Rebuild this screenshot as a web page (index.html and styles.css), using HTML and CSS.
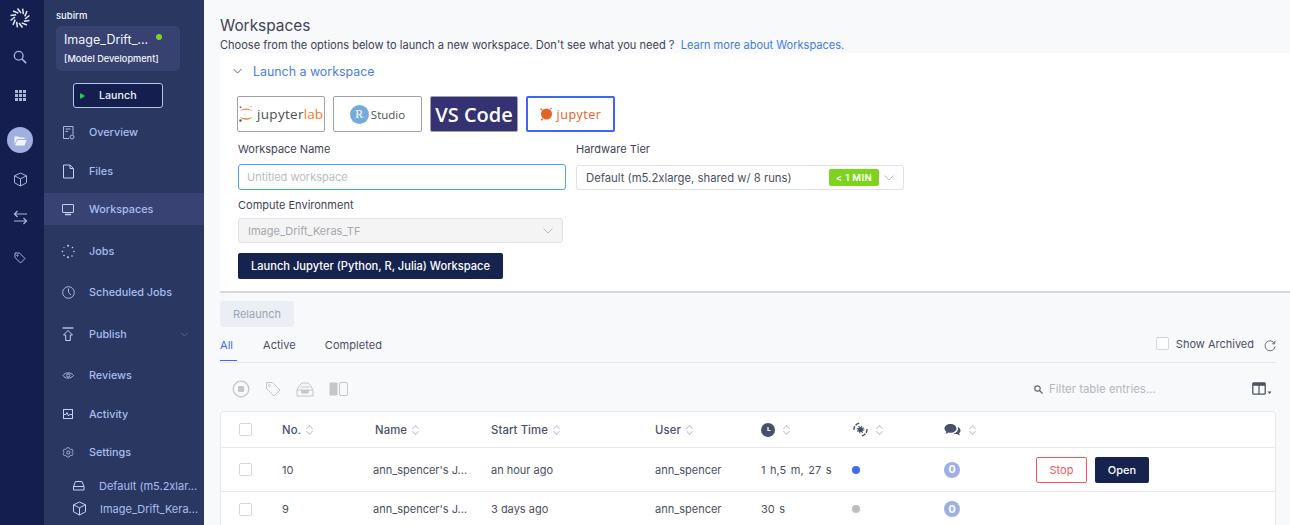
FILE: index.html
```html
<!DOCTYPE html>
<html lang="en">
<head>
<meta charset="utf-8">
<title>Workspaces</title>
<link rel="stylesheet" href="styles.css">
</head>
<body>
<div class="app">
  <nav class="rail">
    <svg class="rail-logo" width="26" height="26" viewBox="0 0 26 26" fill="none" stroke="#e8ebf5" stroke-width="1.500"><path d="M10.500 3.500L14 8"/><path d="M10.500 3.500L14 8" transform="rotate(30 13 13)"/><path d="M10.500 3.500L14 8" transform="rotate(60 13 13)"/><path d="M10.500 3.500L14 8" transform="rotate(90 13 13)"/><path d="M10.500 3.500L14 8" transform="rotate(120 13 13)"/><path d="M10.500 3.500L14 8" transform="rotate(150 13 13)"/><path d="M10.500 3.500L14 8" transform="rotate(180 13 13)"/><path d="M10.500 3.500L14 8" transform="rotate(210 13 13)"/><path d="M10.500 3.500L14 8" transform="rotate(240 13 13)"/><path d="M10.500 3.500L14 8" transform="rotate(270 13 13)"/><path d="M10.500 3.500L14 8" transform="rotate(300 13 13)"/><path d="M10.500 3.500L14 8" transform="rotate(330 13 13)"/></svg>
    <svg class="rail-ico rail-search" width="14" height="14" viewBox="0 0 16 16" fill="none" stroke="#a9b5d9" stroke-width="1.500"><circle cx="6.500" cy="6.500" r="5"/><path d="M10 10l5 5" stroke-width="2"/></svg>
    <svg class="rail-ico rail-grid" width="11" height="11" viewBox="0 0 11 11" fill="#a9b5d9"><rect width="3" height="3"/><rect x="4" width="3" height="3"/><rect x="8" width="3" height="3"/><rect y="4" width="3" height="3"/><rect x="4" y="4" width="3" height="3"/><rect x="8" y="4" width="3" height="3"/><rect y="8" width="3" height="3"/><rect x="4" y="8" width="3" height="3"/><rect x="8" y="8" width="3" height="3"/></svg>
    <div class="rail-active"><svg width="13" height="11" viewBox="0 0 13 11" fill="#f3f5fc"><path d="M.5 1.500h4l1 1h5v1.500H3L.5 9.500z"/><path d="M3.500 5h9L10.500 10.500H1z"/></svg></div>
    <svg class="rail-ico rail-cube" width="15" height="15" viewBox="0 0 15 15" fill="none" stroke="#a9b5d9" stroke-width="1"><path d="M7.500 1l6 2.800v7L7.500 14l-6-3.200v-7z"/><path d="M1.500 3.800l6 3 6-3M7.500 6.800V14"/></svg>
    <svg class="rail-ico rail-swap" width="15" height="15" viewBox="0 0 15 15" fill="none" stroke="#a9b5d9" stroke-width="1.200"><path d="M14 4H1.500M4.500 1L1.500 4l3 3"/><path d="M1 11h12.500M10.500 8l3 3-3 3"/></svg>
    <svg class="rail-ico rail-tag" width="12" height="12" viewBox="0 0 12 12" fill="none" stroke="#a9b5d9" stroke-width="1"><path d="M1 1h4.500L11 6.500 6.500 11 1 5.500z"/><circle cx="3.500" cy="3.500" r=".7"/></svg>
  </nav>

  <aside class="side">
    <div class="owner">subirm</div>
    <div class="project">
      <div class="project-top"><span class="project-name">Image_Drift_...</span><span class="project-dot"></span></div>
      <div class="project-stage">[Model Development]</div>
    </div>
    <div class="launch"><span class="launch-play"></span><span>Launch</span></div>
    <ul class="nav">
      <li class="nav-item">
        <svg width="15" height="15" viewBox="0 0 15 15" fill="none" stroke="#a9b9e6"><path d="M8 13.500H2.500v-12h9.500v8"/><path d="M4.500 4h5M4.500 6.500h2.500"/><circle cx="11" cy="12" r="2"/></svg>
        <span>Overview</span></li>
      <li class="nav-item gap-7">
        <svg width="15" height="15" viewBox="0 0 15 15" fill="none" stroke="#c6d1f0"><path d="M2.500 1h6.500l3.500 3.500v9.500h-10z"/><path d="M9 1v3.500h3.500"/></svg>
        <span>Files</span></li>
      <li class="nav-item gap-6 nav-active">
        <svg width="15" height="15" viewBox="0 0 15 15" fill="none" stroke="#c6d1f0"><rect x="1.500" y="2.500" width="11" height="8" rx=".5"/><path d="M4 12.500h6" stroke-width="1.500"/></svg>
        <span>Workspaces</span></li>
      <li class="nav-item gap-10">
        <svg width="15" height="15" viewBox="0 0 15 15" fill="#c6d1f0"><circle cx="7" cy="1.800" r="1"/><circle cx="11.500" cy="3.500" r=".8"/><circle cx="13" cy="7.500" r=".8"/><circle cx="11" cy="12" r=".8"/><circle cx="7" cy="13.200" r="1"/><circle cx="3" cy="11.500" r=".8"/><circle cx="1.500" cy="7.500" r=".8"/><circle cx="3" cy="3.500" r=".6"/></svg>
        <span>Jobs</span></li>
      <li class="nav-item gap-9">
        <svg width="15" height="15" viewBox="0 0 15 15" fill="none" stroke="#a9b9e6"><circle cx="7.500" cy="7.500" r="5.800"/><path d="M7.500 3.500v4l2.500 2.500"/></svg>
        <span>Scheduled Jobs</span></li>
      <li class="nav-item gap-10">
        <svg width="15" height="15" viewBox="0 0 15 15" fill="none" stroke="#c6d1f0"><path d="M1.500 1h11" stroke-width="1.300"/><path d="M7 3.500l4.500 4.500H9.300v5.500H4.700V8H2.500z"/></svg>
        <span>Publish</span><svg class="nav-chevron" width="7" height="5" viewBox="0 0 7 5" fill="none" stroke="#56638f"><path d="M.5 1l3 3 3-3"/></svg></li>
      <li class="nav-item gap-9">
        <svg width="15" height="15" viewBox="0 0 15 15" fill="none" stroke="#a9b9e6"><path d="M2 7.500C4 4 10 4 12.500 7.500 10 11 4 11 2 7.500z"/><circle cx="7.200" cy="7.500" r="1.600"/></svg>
        <span>Reviews</span></li>
      <li class="nav-item gap-7">
        <svg width="15" height="15" viewBox="0 0 15 15" fill="none" stroke="#c6d1f0"><rect x="2.500" y="2.500" width="9" height="9"/><path d="M2.500 7.500h2.500l1-2 1.500 3.500 1-1.500h3"/></svg>
        <span>Activity</span></li>
      <li class="nav-item gap-6">
        <svg width="15" height="15" viewBox="0 0 15 15" fill="none" stroke="#a9b9e6"><path d="M5.500 1.800h3l.5 1.500 1.500.7 1.500-.5 1.300 2.400-1.100 1.100v1.200l1.100 1.100-1.300 2.400-1.500-.5-1.500.7-.5 1.500h-3L5 11.900l-1.500-.7-1.500.5L.7 9.300l1.100-1.100V7L.7 5.900 2 3.500l1.500.5L5 3.300z" transform="translate(1.500 1.300) scale(.8)"/><circle cx="7.300" cy="7.500" r="1.600"/></svg>
        <span>Settings</span></li>
      <li class="nav-sub sub-first">
        <svg width="14" height="12" viewBox="0 0 14 12" fill="none" stroke="#c6d1f0"><path d="M1.500 6.500L3.500 1.500h6.500l2 5v3.500h-10.500z"/><path d="M1.500 6.500h10.500"/></svg>
        <span>Default (m5.2xlar...</span></li>
      <li class="nav-sub">
        <svg width="15" height="15" viewBox="0 0 15 15" fill="none" stroke="#c6d1f0"><path d="M7.500 1l6 2.800v7L7.500 14l-6-3.200v-7z"/><path d="M1.500 3.800l6 3 6-3M7.500 6.800V14"/></svg>
        <span>Image_Drift_Kera...</span></li>
    </ul>
  </aside>

  <main class="main">
    <header class="head">
      <h1 class="title">Workspaces</h1>
      <p class="intro">Choose from the options below to launch a new workspace. Don't see what you need ?&nbsp; <a class="link">Learn more about Workspaces.</a></p>
    </header>

    <section class="panel">
      <div class="panel-head">
        <svg width="9" height="6" viewBox="0 0 9 6" fill="none" stroke="#5c6477"><path d="M.5 1l4 4 4-4"/></svg>
        <span>Launch a workspace</span>
      </div>
      <div class="tiles">
        <div class="tile tile-lab">
          <svg width="14" height="16" viewBox="0 0 14 16"><circle cx="1.500" cy="1.200" r="1" fill="#767677"/><circle cx="1.500" cy="14.500" r="1.300" fill="#616262"/><circle cx="12" cy=".8" r=".7" fill="#9e9e9e"/><path d="M1 5C3 1.500 11 1.500 13 5 10 3.200 4 3.200 1 5zM1 11c2 3.500 10 3.500 12 0-3 1.800-9 1.800-12 0z" fill="#f37726"/></svg>
          <span class="lab-j">jupyter</span><span class="lab-l">lab</span>
        </div>
        <div class="tile tile-r">
          <span class="r-ball">R</span><span class="r-text">Studio</span>
        </div>
        <div class="tile tile-vs">VS Code</div>
        <div class="tile tile-jup">
          <svg width="13" height="14" viewBox="0 0 13 14"><circle cx="6.500" cy="7" r="5.500" fill="#e2622a"/><circle cx="1.500" cy="2.500" r="1" fill="#e2622a"/><circle cx="2" cy="12.500" r="1" fill="#e2622a"/><circle cx="11" cy="1.500" r=".8" fill="#e2622a"/></svg>
          <span>jupyter</span>
        </div>
      </div>
      <div class="form-row">
        <div class="field">
          <label class="label">Workspace Name</label>
          <div class="input">Untitled workspace</div>
        </div>
        <div class="field field-hw">
          <label class="label">Hardware Tier</label>
          <div class="select select-hw">
            <span class="select-text">Default (m5.2xlarge, shared w/ 8 runs)</span>
            <span class="badge">&lt; 1 MIN</span>
            <svg width="10" height="6" viewBox="0 0 10 6" fill="none" stroke="#b9bcc4"><path d="M.5.500l4.500 4.500 4.500-4.500"/></svg>
          </div>
        </div>
      </div>
      <label class="label label-env">Compute Environment</label>
      <div class="select select-env">
        <span class="select-text">Image_Drift_Keras_TF</span>
        <svg width="10" height="6" viewBox="0 0 10 6" fill="none" stroke="#b9bcc4"><path d="M.5.500l4.500 4.500 4.500-4.500"/></svg>
      </div>
      <button class="launch-btn">Launch Jupyter (Python, R, Julia) Workspace</button>
    </section>

    <section class="runs">
      <button class="relaunch">Relaunch</button>
      <div class="tabs">
        <span class="tab tab-on">All</span>
        <span class="tab">Active</span>
        <span class="tab">Completed</span>
        <span class="archived"><span class="check"></span>Show Archived</span>
        <svg class="refresh" width="12" height="12" viewBox="0 0 12 12" fill="none" stroke="#6b6f7a"><path d="M10.500 3.500A5 5 0 1 0 11 6.500"/><path d="M10.800 1v2.800H8" /></svg>
      </div>
      <div class="toolbar">
        <svg width="18" height="18" viewBox="0 0 18 18" fill="none" stroke="#c4c6ca" stroke-width="1.300"><circle cx="9" cy="9" r="7.800"/><rect x="6" y="6" width="6" height="6" rx="1" fill="#c4c6ca" stroke="none"/></svg>
        <svg width="16" height="16" viewBox="0 0 16 16" fill="none" stroke="#c4c6ca"><path d="M1.500 1.500h6L15 9l-6 6-7.500-7.500z"/><circle cx="4.500" cy="4.500" r="1"/></svg>
        <svg width="18" height="15" viewBox="0 0 18 15" fill="none" stroke="#c4c6ca"><path d="M1 8l2.500-4.500L6 1h6l2.500 2.500L17 8v6H1z"/><path d="M1 8h5v2.500h6V8h5M4.500 5h9" /><rect x="6" y="8" width="6" height="3" fill="#c4c6ca"/></svg>
        <svg width="19" height="15" viewBox="0 0 19 15"><rect x=".5" y=".5" width="8" height="13" rx="1" fill="#c4c6ca"/><rect x="10.500" y=".5" width="8" height="13" rx="1.500" fill="none" stroke="#c4c6ca"/></svg>
        <span class="filter">
          <svg width="9" height="9" viewBox="0 0 9 9" fill="none" stroke="#5f6470" stroke-width="1.200"><circle cx="3.500" cy="3.500" r="2.700"/><path d="M5.500 5.500l3 3"/></svg>
          Filter table entries...
        </span>
        <svg class="cols" width="20" height="14" viewBox="0 0 20 14"><rect x=".8" y=".8" width="12.400" height="11.400" rx="1" fill="none" stroke="#4f5461" stroke-width="1.300"/><rect x=".8" y=".8" width="12.400" height="3" fill="#4f5461"/><path d="M7 3v9" stroke="#4f5461" stroke-width="1.200"/><path d="M15.500 9.500h4l-2 2.500z" fill="#4f5461"/></svg>
      </div>
      <div class="table">
        <div class="row row-head">
          <span class="check"></span>
          <span class="cell">No.<i class="sort"></i></span>
          <span class="cell">Name<i class="sort"></i></span>
          <span class="cell">Start Time<i class="sort"></i></span>
          <span class="cell">User<i class="sort"></i></span>
          <span class="cell"><svg width="14" height="14" viewBox="0 0 14 14"><circle cx="7" cy="7" r="7" fill="#49506b"/><path d="M7 4v3.500h2.500" fill="none" stroke="#fff" stroke-width="1.200"/></svg><i class="sort sort-wide"></i></span>
          <span class="cell"><svg class="status-ico" width="15" height="15" viewBox="0 0 15 15"><circle cx="7.500" cy="7.500" r="2.600" fill="#49506b"/><circle cx="7.500" cy="7.500" r="3.300" fill="none" stroke="#49506b" stroke-width="1.200" stroke-dasharray="1.200 1.400"/><path d="M1 8a6.500 6.500 0 0 1 6-7M14 7a6.500 6.500 0 0 1-6 7" fill="none" stroke="#49506b" stroke-width="1.400" stroke-dasharray="4 1.200"/></svg><i class="sort sort-wide"></i></span>
          <span class="cell"><svg width="17" height="14" viewBox="0 0 17 14" fill="#49506b"><path d="M6.500 1C3 1 .5 3 .5 5.500c0 1.300.7 2.400 1.800 3.200L1.500 11l3-1.500c.7.200 1.300.2 2 .2 3.500 0 6-2 6-4.300S10 1 6.500 1z"/><path d="M14 4c1.500.8 2.500 2 2.500 3.500 0 1-.5 2-1.300 2.700l.6 2.300-2.800-1.500c-1.200.2-2.500.1-3.500-.5 2.500-.3 5-2.500 4.500-6.500z"/></svg><i class="sort sort-wide"></i></span>
          <span></span>
        </div>
        <div class="row row-one">
          <span class="check"></span>
          <span class="cell">10</span>
          <span class="cell cell-name">ann_spencer's J...</span>
          <span class="cell">an hour ago</span>
          <span class="cell">ann_spencer</span>
          <span class="cell cell-dur">1 h,5 m, 27 s</span>
          <span class="cell"><i class="dot dot-blue"></i></span>
          <span class="cell"><i class="count">0</i></span>
          <span class="actions"><button class="stop">Stop</button><button class="open">Open</button></span>
        </div>
        <div class="row row-two">
          <span class="check"></span>
          <span class="cell">9</span>
          <span class="cell cell-name">ann_spencer's J...</span>
          <span class="cell">3 days ago</span>
          <span class="cell">ann_spencer</span>
          <span class="cell cell-dur">30 s</span>
          <span class="cell"><i class="dot dot-grey"></i></span>
          <span class="cell"><i class="count">0</i></span>
          <span></span>
        </div>
      </div>
    </section>
  </main>
</div>
</body>
</html>
```
FILE: styles.css
```css
* { box-sizing: border-box; }
html, body { margin: 0; height: 100%; overflow: hidden; }
body { font-family: Inter, "Liberation Sans", sans-serif; font-size: 11.5px; color: #4a4f60; background: #f8f9fb; }
button { font-family: inherit; cursor: pointer; }
i { font-style: normal; }

.app { display: flex; width: 1290px; height: 525px; overflow: hidden; }

.rail { width: 44px; flex: none; background: #141f4f; display: flex; flex-direction: column; align-items: center; padding: 5px 4px 0 0; }
.rail-search { margin-top: 19px; }
.rail-grid { margin-top: 26px; }
.rail-active { width: 26px; height: 26px; margin-top: 26px; border-radius: 50%; background: #a0afdf; display: flex; align-items: center; justify-content: center; }
.rail-cube { margin-top: 19px; }
.rail-swap { margin-top: 23px; }
.rail-tag { margin-top: 27px; }

.side { width: 160px; flex: none; background: #2a3760; color: #a9bdf0; font-size: 10.800px; padding-top: 10px; }
.owner { margin-left: 12px; font-size: 9.500px; font-weight: 500; line-height: 12px; color: #f0f3fb; }
.project { width: 124px; height: 45px; margin: 4px 0 0 12px; padding: 5px 0 0 8px; background: #374270; border-radius: 5px; color: #f3f5fc; }
.project-top { display: flex; align-items: center; height: 17px; }
.project-name { font-size: 12.500px; font-weight: 400; width: 92px; white-space: nowrap; }
.project-dot { width: 6px; height: 6px; margin: -6px 0 0 0; border-radius: 50%; background: #7ed321; }
.project-stage { font-size: 9.200px; font-weight: 500; line-height: 12px; margin-top: 5px; white-space: nowrap; }
.launch { width: 90px; height: 25px; margin: 12px 0 0 29px; padding-left: 6px; display: flex; align-items: center; background: #141f4f; border: 1px solid #b6c3ef; border-radius: 3px; font-size: 10.700px; font-weight: 500; color: #f0f3fb; }
.launch-play { width: 0; height: 0; margin-right: 14px; border-left: 5px solid #2ecc57; border-top: 3.500px solid transparent; border-bottom: 3.500px solid transparent; }

.nav { list-style: none; margin: 0; padding: 0; margin-top: 8px; }
.nav-item { height: 32px; padding-left: 17px; display: flex; align-items: center; gap: 13px; white-space: nowrap; font-weight: 500; }
.nav-item svg { flex: none; }
.nav-active { background: #394373; }
.gap-6 { margin-top: 6px; }
.gap-7 { margin-top: 7px; }
.gap-9 { margin-top: 9px; }
.gap-10 { margin-top: 10px; }
.nav-item .nav-chevron { margin-left: 41px; }
.nav-sub { height: 23px; padding-left: 28px; display: flex; align-items: center; gap: 13px; white-space: nowrap; font-size: 11px; font-weight: 400; }
.nav-sub svg { flex: none; margin-left: 0; }
.sub-first { margin-top: 6px; }
.nav-sub span { margin-left: 0; }

.main { flex: 1; min-width: 0; }
.head { padding: 17px 0 0 16px; height: 49px; }
.title { margin: 0; font-size: 15.400px; font-weight: 400; line-height: 18px; color: #3e4356; }
.intro { margin: 3px 0 0; font-size: 11.050px; line-height: 14px; color: #3e4356; white-space: nowrap; }
.link { color: #3f7de0; }

.panel { margin: 4px 0 0 16px; height: 240px; background: #fff; border-bottom: 2px solid #d6d6d6; padding: 0 0 0 13px; }
.panel-head { display: flex; align-items: center; gap: 11px; height: 36px; font-size: 12.400px; color: #4a7fd6; }
.tiles { display: flex; gap: 8px; margin: 7px 0 0 4px; }
.tile { width: 88px; height: 36px; border: 1px solid #a0a2a6; border-radius: 2px; display: flex; align-items: center; justify-content: center; background: #fff; white-space: nowrap; }
.tile-lab { font-family: "Open Sans", sans-serif; font-size: 13.500px; }
.tile-lab svg { flex: none; }
.lab-j { color: #4e4e4e; margin-left: 4px; letter-spacing: .3px; }
.lab-l { color: #f37726; }
.tile-r { width: 89px; gap: 2px; }
.r-ball { width: 19px; height: 19px; border-radius: 50%; background: #75aadb; color: #fff; font-family: "Liberation Serif", serif; font-size: 12px; display: flex; align-items: center; justify-content: center; }
.r-text { font-family: "Open Sans", sans-serif; font-size: 11.500px; color: #4f4f4f; }
.tile-vs { background: #343273; color: #fff; font-family: "Open Sans", sans-serif; font-size: 20px; font-weight: 600; }
.tile-jup { width: 89px; border: 2px solid #3f66f0; gap: 4px; font-family: "Open Sans", sans-serif; font-size: 12.500px; color: #e2622a; letter-spacing: .5px; }

.form-row { display: flex; margin: 10px 0 0 5px; }
.field { width: 328px; }
.field-hw { margin-left: 10px; }
.label { display: block; font-size: 11px; line-height: 14px; color: #3e4356; }
.input { height: 26px; margin-top: 8px; padding-left: 8px; display: flex; align-items: center; border: 1px solid #45a5f5; border-radius: 3px; color: #b9bcc4; font-size: 11px; }
.select { height: 25px; display: flex; align-items: center; padding: 0 9px; border: 1px solid #dfe1e6; border-radius: 3px; font-size: 11px; background: #fff; }
.select-hw { margin-top: 9px; font-size: 11.300px; }
.select-text { flex: 1; white-space: nowrap; }
.badge { height: 17px; padding: 0 7px; margin-right: 5px; display: flex; align-items: center; background: #7ed321; border-radius: 2px; color: #fff; font-size: 9.500px; font-weight: 600; letter-spacing: .35px; }
.label-env { margin: 8px 0 0 5px; }
.select-env { width: 325px; margin: 6px 0 0 5px; background: #f4f4f4; color: #a5a8ae; }
.launch-btn { display: block; width: 265px; height: 26px; margin: 10px 0 0 5px; padding: 0; background: #17234f; border: 0; border-radius: 2px; color: #fff; font-size: 11.100px; font-weight: 500; }

.runs { padding: 8px 14px 0 16px; }
.relaunch { display: block; width: 74px; height: 26px; padding: 0; background: #ebeff3; border: 0; border-radius: 3px; color: #9aa5b5; font-size: 11px; }
.tabs { display: flex; align-items: center; height: 36px; border-bottom: 1px solid #e4e6ea; font-size: 11px; }
.tab { height: 35px; display: flex; align-items: center; margin-right: 29px; color: #4a4f60; letter-spacing: .05px; }
.tab-on { width: 17px; height: 34px; margin-right: 26px; padding-top: 2px; align-self: flex-start; border-bottom: 1px solid #3f66f0; color: #3f66f0; }
.archived { margin-left: auto; display: flex; align-items: center; gap: 7px; padding-bottom: 2px; }
.refresh { margin-left: 10px; margin-top: 3px; }
.toolbar { display: flex; align-items: center; gap: 15px; height: 48px; padding: 4px 0 0 12px; }
.filter { margin-left: auto; display: flex; align-items: center; gap: 6px; color: #b4b7bd; font-size: 11.400px; width: 203px; }
.cols { margin-right: 4px; }

.table { background: #fff; border: 1px solid #e6e8ec; border-bottom: 0; border-radius: 4px 4px 0 0; }
.row { display: grid; grid-template-columns: 61px 93px 116px 164px 106px 91px 92px 92px 1fr; align-items: center; border-bottom: 1px solid #e6e8ec; white-space: nowrap; font-size: 11px; }
.row .check { margin-left: 18px; }
.row-head { height: 36px; font-size: 11.300px; font-weight: 500; color: #49506b; letter-spacing: .1px; }
.row-one { height: 44px; }
.row-two { height: 34px; border-bottom: 0; }
.cell { display: flex; align-items: center; }
.cell-name { margin-left: -2px; }
.cell-dur { word-spacing: 1.500px; }
.status-ico { margin-left: 1px; }
.check { display: block; width: 13px; height: 13px; border: 1px solid #d4d6da; border-radius: 2px; background: #fff; }
.sort { width: 7px; height: 10px; margin-left: 5px; position: relative; }
.sort::before, .sort::after { content: ""; position: absolute; left: 1px; width: 4px; height: 4px; border-left: 1px solid #c3c7d6; border-top: 1px solid #c3c7d6; transform: rotate(45deg); }
.sort::before { top: 1px; }
.sort::after { bottom: 1px; transform: rotate(225deg); }
.sort-wide { margin-left: 8px; }
.dot { display: block; width: 8px; height: 8px; border-radius: 50%; }
.dot-blue { background: #3f6ff0; }
.dot-grey { background: #bdbdbd; }
.count { width: 16px; height: 16px; border-radius: 50%; background: #a0afe3; color: #fff; font-weight: 700; font-size: 10.500px; display: flex; align-items: center; justify-content: center; }
.actions { display: flex; gap: 8px; }
.stop { width: 51px; height: 26px; padding: 0; background: #fff; border: 1px solid #ed5a55; border-radius: 2px; color: #ed5a55; font-size: 11px; }
.open { width: 54px; height: 26px; padding: 0; background: #17234f; border: 0; border-radius: 2px; color: #fff; font-size: 11px; font-weight: 500; }
```
